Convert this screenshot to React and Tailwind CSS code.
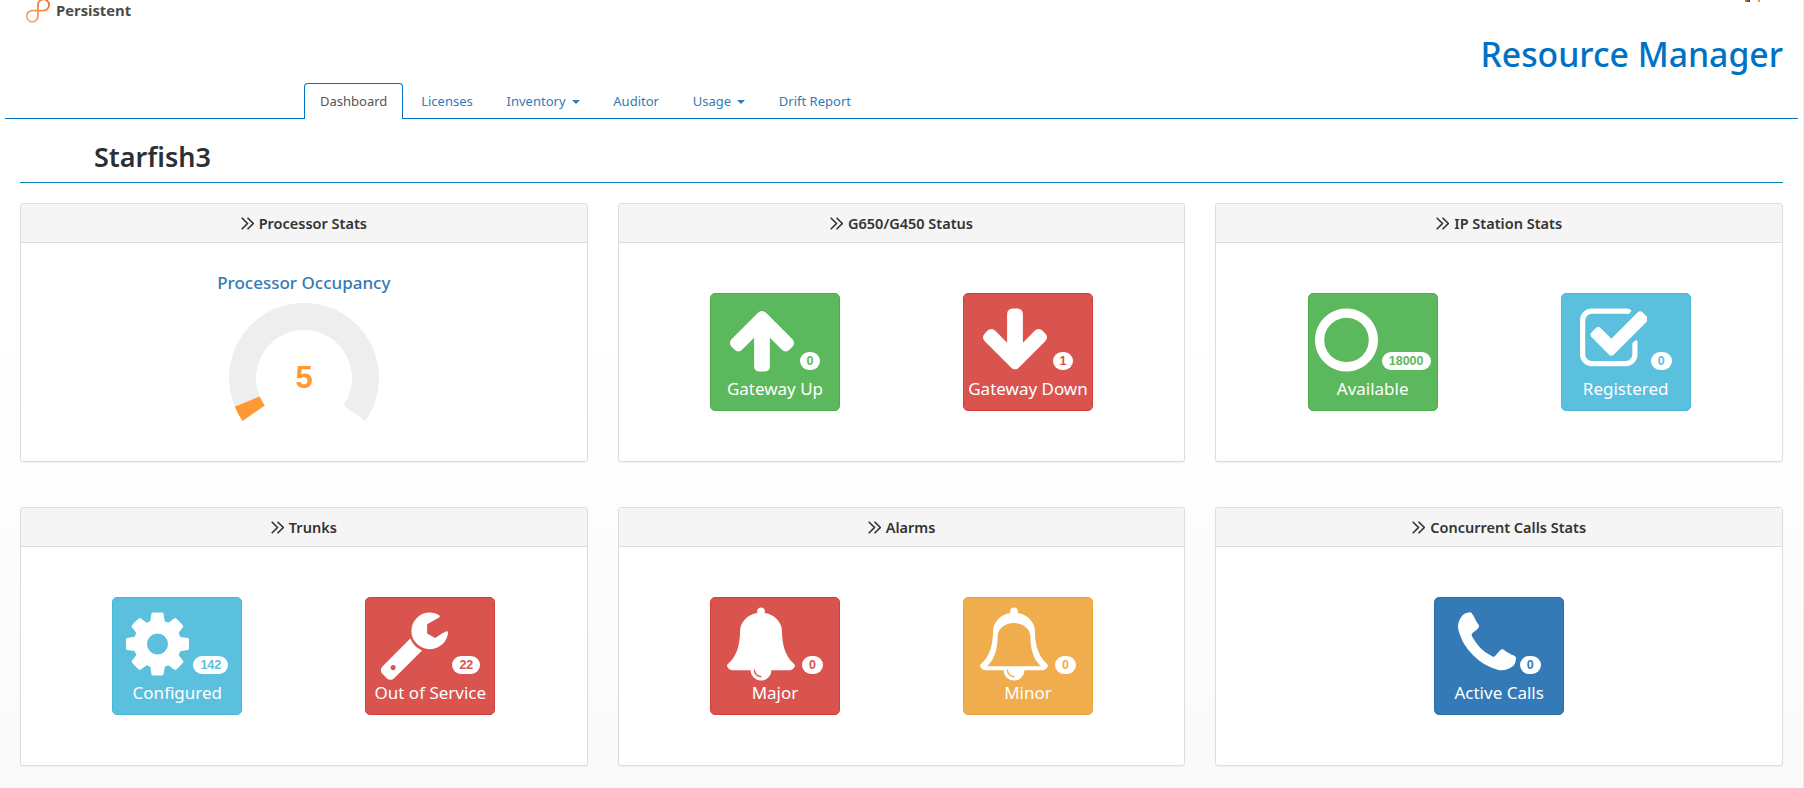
import { useState } from "react";

const paths = {
  up: "M1675 971q0 51-37 90l-75 75q-38 38-91 38-54 0-90-38l-294-293v704q0 52-37.5 84.5t-90.5 32.5h-128q-53 0-90.5-32.5t-37.5-84.5v-704l-294 293q-36 38-90 38t-90-38l-75-75q-38-38-38-90 0-53 38-91l651-651q35-37 90-37 54 0 91 37l651 651q37 39 37 91z",
  down: "M1675 832q0 53-37 90l-651 652q-39 37-91 37-53 0-90-37l-651-652q-38-36-38-90 0-53 38-91l74-75q39-37 91-37 53 0 90 37l294 294v-704q0-52 38-90t90-38h128q52 0 90 38t38 90v704l294-294q37-37 90-37 52 0 91 37l75 75q37 39 37 91z",
  ring: "M896 352q-148 0-273 73t-198 198-73 273 73 273 198 198 273 73 273-73 198-198 73-273-73-273-198-198-273-73zm768 544q0 209-103 385.5t-279.5 279.5-385.5 103-385.5-103-279.5-279.5-103-385.5 103-385.5 279.5-279.5 385.5-103 385.5 103 279.5 279.5 103 385.5z",
  check: "M1472 930v318q0 119-84.5 203.5t-203.5 84.5h-832q-119 0-203.5-84.5t-84.5-203.5v-832q0-119 84.5-203.5t203.5-84.5h832q63 0 117 25 15 7 18 23 3 17-9 29l-49 49q-10 10-23 10-3 0-9-2-23-6-45-6h-832q-66 0-113 47t-47 113v832q0 66 47 113t113 47h832q66 0 113-47t47-113v-254q0-13 9-22l64-64q10-10 23-10 6 0 12 3 20 8 20 29zm231-489l-814 814q-24 24-57 24t-57-24l-430-430q-24-24-24-57t24-57l110-110q24-24 57-24t57 24l263 263 647-647q24-24 57-24t57 24l110 110q24 24 24 57t-24 57z",
  cog: "M1152 896q0-106-75-181t-181-75-181 75-75 181 75 181 181 75 181-75 75-181zm512-109v222q0 12-8 23t-20 13l-185 28q-19 54-39 91 35 50 107 138 10 12 10 25t-9 23q-27 37-99 108t-94 71q-12 0-26-9l-138-108q-44 23-91 38-16 136-29 186-7 28-36 28h-222q-14 0-24.5-8.5t-11.5-21.5l-28-184q-49-16-90-37l-141 107q-10 9-25 9-14 0-25-11-126-114-165-168-7-10-7-23 0-12 8-23 15-21 51-66.5t54-70.5q-27-50-41-99l-183-27q-13-2-21-12.5t-8-23.5v-222q0-12 8-23t19-13l186-28q14-46 39-92-40-57-107-138-10-12-10-24 0-10 9-23 26-36 98.5-107.5t94.5-71.5q13 0 26 10l138 107q44-23 91-38 16-136 29-186 7-28 36-28h222q14 0 24.5 8.5t11.5 21.5l28 184q49 16 90 37l142-107q9-9 24-9 13 0 25 10 129 119 165 170 7 8 7 22 0 12-8 23-15 21-51 66.5t-54 70.5q26 50 41 98l183 28q13 2 21 12.5t8 23.5z",
  wrench: "M448 1472q0-26-19-45t-45-19-45 19-19 45 19 45 45 19 45-19 19-45zm644-420l-682 682q-37 37-90 37-52 0-91-37l-106-108q-38-36-38-90 0-53 38-91l681-681q39 98 114.5 173.5t173.5 114.5zm634-435q0 39-23 106-47 134-164.5 217.5t-258.5 83.5q-185 0-316.5-131.5t-131.5-316.5 131.5-316.5 316.5-131.5q58 0 121.5 16.5t107.5 46.5q16 11 16 28t-16 28l-293 169v224l193 107q5-3 79-48.5t135.5-81 70.5-35.5q15 0 23.5 10t8.5 25z",
  bell: "M912 1696q0-16-16-16-59 0-101.5-42.5t-42.5-101.5q0-16-16-16t-16 16q0 73 51.5 124.5t124.5 51.5q16 0 16-16zm816-288q0 52-38 90t-90 38h-448q0 106-75 181t-181 75-181-75-75-181h-448q-52 0-90-38t-38-90q50-42 91-88t85-119.5 74.5-158.5 50-206 19.5-260q0-152 117-282.5t307-158.5q-8-19-8-39 0-40 28-68t68-28 68 28 28 68q0 20-8 39 190 28 307 158.5t117 282.5q0 139 19.5 260t50 206 74.5 158.5 85 119.5 91 88z",
  bellOutline:
    "M912 1696q0-16-16-16-59 0-101.5-42.5t-42.5-101.5q0-16-16-16t-16 16q0 73 51.5 124.5t124.5 51.5q16 0 16-16zm816-288q0 52-38 90t-90 38h-448q0 106-75 181t-181 75-181-75-75-181h-448q-52 0-90-38t-38-90q50-42 91-88t85-119.5 74.5-158.5 50-206 19.5-260q0-152 117-282.5t307-158.5q-8-19-8-39 0-40 28-68t68-28 68 28 28 68q0 20-8 39 190 28 307 158.5t117 282.5q0 139 19.5 260t50 206 74.5 158.5 85 119.5 91 88zM896 384C680 384 496 520 496 704C496 1100 372 1320 236 1440H1556C1420 1320 1296 1100 1296 704C1296 520 1112 384 896 384Z",
  phone: "M1600 1240q0 27-10 70.5t-21 68.5q-21 50-122 106-94 51-186 51-27 0-53-3.5t-57.5-12.5-47-14.5-55.5-20.5-49-18q-98-35-175-83-127-79-264-216t-216-264q-48-77-83-175-3-9-18-49t-20.5-55.5-14.5-47-12.5-57.5-3.5-53q0-92 51-186 56-101 106-122 25-11 68.5-21t70.5-10q14 0 21 3 18 6 53 76 11 19 30 54t35 63.5 31 53.5q3 4 17.5 25t21.5 35.5 7 28.5q0 20-28.5 50t-62 55-62 53-28.5 46q0 9 5 22.5t8.5 20.5 14 24 11.5 19q76 137 174 235t235 174q2 1 19 11.5t24 14 20.5 8.5 22.5 5q18 0 46-28.5t53-62 55-62 50-28.5q14 0 28.5 7t35.5 21.5 25 17.5q25 15 53.5 31t63.5 35 54 30q70 35 76 53 3 7 3 21z",
};

const Glyph = ({ name, x, w, className }) => (
  <svg viewBox={`${x} 0 ${w} 1792`} className={className} fill="white" fillRule="evenodd">
    <path d={paths[name]} />
  </svg>
);

const tones = {
  green: { box: "bg-[#5cb85c] border-[#4cae4c]", text: "text-[#5cb85c]" },
  red: { box: "bg-[#d9534f] border-[#d43f3a]", text: "text-[#d9534f]" },
  blue: { box: "bg-[#5bc0de] border-[#46b8da]", text: "text-[#5bc0de]" },
  amber: { box: "bg-[#f0ad4e] border-[#eea236]", text: "text-[#f0ad4e]" },
  navy: { box: "bg-[#337ab7] border-[#2e6da4]", text: "text-[#337ab7]" },
};

const Tile = ({ tone, icon, x, w, iconClass, gap, count, label }) => (
  <div className={`w-[130px] h-[118px] rounded-[5px] border flex flex-col items-center pt-[9px] ${tones[tone].box}`}>
    <div className="flex items-end h-[74px]">
      <Glyph name={icon} x={x} w={w} className={`h-[74px] ${iconClass}`} />
      <span
        className={`h-[18px] px-[7px] mb-[7px] rounded-full bg-white text-[12.5px] leading-[18px] font-bold font-['Liberation_Sans',sans-serif] ${gap} ${tones[tone].text}`}
      >
        {count}
      </span>
    </div>
    <div className="mt-[1px] text-white text-[17px] leading-[22px] whitespace-nowrap">{label}</div>
  </div>
);

const Card = ({ title, children }) => (
  <section className="h-[259px] bg-white border border-[#ddd] rounded-[3px] shadow-[0_1px_1px_rgba(0,0,0,0.05)]">
    <header className="h-[39px] pt-[1px] bg-[#f5f5f5] border-b border-[#ddd] flex items-center justify-center gap-[5px] text-[14.5px] font-semibold text-[#333]">
      <svg viewBox="3 3 18 18" className="w-[13px] h-[13px]" fill="none" stroke="#333" strokeWidth="2.2">
        <path d="M4 4l8 8-8 8M12 4l8 8-8 8" />
      </svg>
      {title}
    </header>
    {children}
  </section>
);

const TileRow = ({ children }) => (
  <div className="flex justify-center gap-[123px] pt-[50px]">{children}</div>
);

const Gauge = () => (
  <div className="flex flex-col items-center pt-[28px]">
    <div className="text-[17px] leading-[24px] font-medium text-[#337ab7]">Processor Occupancy</div>
    <svg viewBox="-75 -75 150 124" className="w-[150px] h-[124px] mt-[8px]">
      <path
        d="M-61.4 43A75 75 0 1 1 61.4 43L39.3 27.5A48 48 0 1 0 -39.3 27.5Z"
        fill="#eeeeee"
      />
      <path d="M-61.4 43A75 75 0 0 1 -69.3 28.7L-44.3 18.4A48 48 0 0 0 -39.3 27.5Z" fill="#ff9933" />
      <text
        x="0"
        y="10"
        textAnchor="middle"
        fill="#ff9933"
        fontSize="31"
        fontWeight="700"
        fontFamily="'Liberation Sans', sans-serif"
      >
        5
      </text>
    </svg>
  </div>
);

const tabs = [
  { label: "Licenses" },
  { label: "Inventory", caret: true },
  { label: "Auditor" },
  { label: "Usage", caret: true },
  { label: "Drift Report" },
];

export default function App() {
  const [active] = useState("Dashboard");

  return (
    <div className="relative w-[1804px] h-[788px] overflow-hidden border-r border-[#eee] bg-gradient-to-b from-white from-40% to-[#fafafa] font-['Noto_Sans',sans-serif]">
      {/* cut off bits of the user menu at the very top */}
      <div className="absolute top-0 left-[1745px] flex gap-[8px]">
        <span className="w-[5px] h-[2px] bg-gradient-to-r from-[#c98a2b] to-[#2b3a55]" />
        <span className="w-[2px] h-[2px] bg-[#e8963a]" />
      </div>

      {/* top strip */}
      <div className="flex justify-between h-[83px] pl-[26px] pr-[20px]">
        <div className="flex items-start gap-[6px]">
          <svg viewBox="0 0 24 24" className="w-[24px] h-[24px]" fill="none" strokeWidth="1.8">
            <defs>
              <linearGradient id="logo" x1="0" y1="1" x2="1" y2="0">
                <stop offset="0" stopColor="#ffb184" />
                <stop offset="1" stopColor="#f26a1b" />
              </linearGradient>
            </defs>
            <path
              d="M11.9 16.2V5A5.6 5.6 0 1 1 17.5 10.6H6.3A5.6 5.6 0 1 0 11.9 16.2"
              stroke="url(#logo)"
            />
          </svg>
          <span className="text-[14.75px] leading-[21px] font-bold text-[#4a4a4a] font-['Open_Sans',sans-serif]">Persistent</span>
        </div>
        <h1 className="pt-[30px] text-[33.75px] leading-[48px] font-medium text-[#0072c6]">Resource Manager</h1>
      </div>

      {/* nav */}
      <nav className="flex h-[36px] ml-[5px] w-[1793px] pl-[299px] pt-[2px] border-b border-[#0072c6] text-[13px]">
        <div className="-mt-[2px] h-[36px] px-[15px] pt-[1px] bg-white border border-b-0 border-[#0072c6] rounded-t-[4px] flex items-center text-[#555]">
          {active}
        </div>
        {tabs.map((t) => (
          <div key={t.label} className="ml-[2px] px-[15.9px] flex items-center gap-[6px] text-[#337ab7]">
            {t.label}
            {t.caret && <span className="w-0 h-0 border-x-[4px] border-x-transparent border-t-[4px] border-t-[#337ab7]" />}
          </div>
        ))}
      </nav>

      {/* page heading */}
      <div className="mx-[20px] w-[1763px] h-[64px] pl-[74px] pb-[4px] border-b border-[#0086b3] flex items-end">
        <h2 className="text-[27px] leading-[42px] font-semibold text-[#2b3036]">Starfish3</h2>
      </div>

      <div className="grid grid-cols-3 gap-x-[30px] gap-y-[45px] w-[1763px] mx-[20px] mt-[20px]">
        <Card title="Processor Stats">
          <Gauge />
        </Card>
        <Card title="G650/G450 Status">
          <TileRow>
            <Tile tone="green" icon="up" x={117} w={1558} iconClass="w-[64px]" gap="ml-[6px]" count="0" label="Gateway Up" />
            <Tile tone="red" icon="down" x={117} w={1558} iconClass="w-[64px]" gap="ml-[6px]" count="1" label="Gateway Down" />
          </TileRow>
        </Card>
        <Card title="IP Station Stats">
          <TileRow>
            <Tile tone="green" icon="ring" x={128} w={1536} iconClass="w-[63px]" gap="ml-[4px]" count="18000" label="Available" />
            <Tile tone="blue" icon="check" x={64} w={1640} iconClass="w-[67px]" gap="ml-[4px]" count="0" label="Registered" />
          </TileRow>
        </Card>
        <Card title="Trunks">
          <TileRow>
            <Tile tone="blue" icon="cog" x={128} w={1536} iconClass="w-[63px]" gap="ml-[4px]" count="142" label="Configured" />
            <Tile tone="red" icon="wrench" x={64} w={1662} iconClass="w-[68px]" gap="ml-[4px]" count="22" label="Out of Service" />
          </TileRow>
        </Card>
        <Card title="Alarms">
          <TileRow>
            <Tile tone="red" icon="bell" x={64} w={1664} iconClass="w-[68px]" gap="ml-[7px]" count="0" label="Major" />
            <Tile tone="amber" icon="bellOutline" x={64} w={1664} iconClass="w-[68px]" gap="ml-[7px]" count="0" label="Minor" />
          </TileRow>
        </Card>
        <Card title="Concurrent Calls Stats">
          <TileRow>
            <Tile tone="navy" icon="phone" x={192} w={1408} iconClass="w-[58px]" gap="ml-[4px]" count="0" label="Active Calls" />
          </TileRow>
        </Card>
      </div>
    </div>
  );
}
